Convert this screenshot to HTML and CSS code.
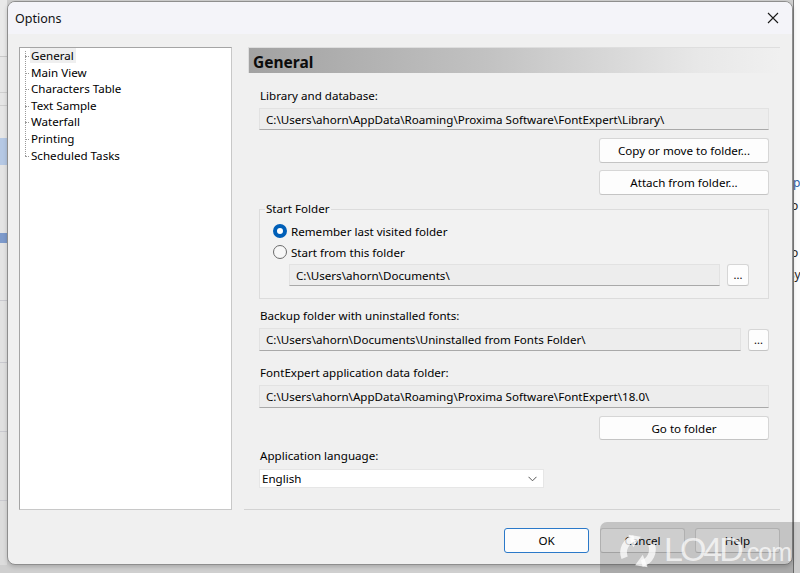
FILE: index.html
```html
<!DOCTYPE html>
<html>
<head>
<meta charset="utf-8">
<link rel="stylesheet" href="styles.css">
<title>Options</title>
</head>
<body>
<div class="desk-left"></div>
<div class="center-col">
  <div class="dialog">
    <div class="titlebar">
      <span class="title">Options</span>
      <svg class="close" width="12" height="12" viewBox="0 0 12 12"><path d="M1 1 L11 11 M11 1 L1 11" stroke="#1a1a1a" stroke-width="1.1" fill="none"/></svg>
    </div>
    <div class="body">
      <div class="tree">
        <ul class="tree-list">
          <li><span class="sel">General</span></li>
          <li>Main View</li>
          <li>Characters Table</li>
          <li>Text Sample</li>
          <li>Waterfall</li>
          <li>Printing</li>
          <li>Scheduled Tasks</li>
        </ul>
      </div>
      <div class="panel">
        <div class="panel-head">General</div>
        <div class="panel-body">
          <div class="label l1">Library and database:</div>
          <div class="field tb1">C:\Users\ahorn\AppData\Roaming\Proxima Software\FontExpert\Library\</div>
          <div class="btn-right b1"><button class="btn wide">Copy or move to folder...</button></div>
          <div class="btn-right b2"><button class="btn wide">Attach from folder...</button></div>
          <fieldset class="group">
            <legend>Start Folder</legend>
            <div class="radio r1"><span class="dot on"></span>Remember last visited folder</div>
            <div class="radio r2"><span class="dot"></span>Start from this folder</div>
            <div class="path-row">
              <div class="field grow">C:\Users\ahorn\Documents\</div>
              <button class="btn dots">...</button>
            </div>
          </fieldset>
          <div class="label l2">Backup folder with uninstalled fonts:</div>
          <div class="row2">
            <div class="field grow">C:\Users\ahorn\Documents\Uninstalled from Fonts Folder\</div>
            <button class="btn dots d2">...</button>
          </div>
          <div class="label l3">FontExpert application data folder:</div>
          <div class="field tb3">C:\Users\ahorn\AppData\Roaming\Proxima Software\FontExpert\18.0\</div>
          <div class="btn-right b3"><button class="btn wide tall">Go to folder</button></div>
          <div class="label l4">Application language:</div>
          <div class="select">
            <span>English</span>
            <svg width="9" height="6" viewBox="0 0 9 6"><path d="M0.5 0.8 L4.5 4.8 L8.5 0.8" stroke="#555" stroke-width="1" fill="none"/></svg>
          </div>
        </div>
      </div>
    </div>
    <div class="footer">
      <button class="btn fbtn ok">OK</button>
      <button class="btn fbtn">Cancel</button>
      <button class="btn fbtn">Help</button>
    </div>
  </div>
  <div class="watermark">
    <svg class="wm-logo" width="46" height="44" viewBox="0 0 48 46">
      <path d="M10 30 A15 15 0 0 1 20 10" stroke="rgba(255,255,255,0.75)" stroke-width="7" fill="none"/>
      <path d="M14 6 L27 8 L19 19 Z" fill="rgba(255,255,255,0.75)"/>
      <path d="M38 16 A15 15 0 0 1 28 36" stroke="rgba(255,255,255,0.75)" stroke-width="7" fill="none"/>
      <path d="M34 40 L21 38 L29 27 Z" fill="rgba(255,255,255,0.75)"/>
    </svg>
    <span class="wm-text">LO4D<small>.com</small></span>
  </div>
</div>
<div class="desk-right">
  <span class="frag f1">rp</span>
  <span class="frag f2">lo</span>
  <span class="frag f3">lo</span>
  <span class="frag f4">Sy</span>
</div>
</body>
</html>
```
FILE: styles.css
```css
* { box-sizing: border-box; }
html, body { margin: 0; padding: 0; }
body {
  width: 800px;
  height: 573px;
  overflow: hidden;
  display: flex;
  font-family: "Noto Sans", "Open Sans", sans-serif;
  font-size: 11.6px;
  color: #000;
  background: #cfcfcf;
}
.desk-left {
  width: 7px;
  flex: none;
  background: linear-gradient(to bottom,
    #e9e9e9 0, #e9e9e9 56px, #c9c9c9 56px, #c9c9c9 57px,
    #e6e6e6 57px, #e6e6e6 92px, #cfcfcf 92px, #cfcfcf 93px,
    #e6e6e6 93px, #e6e6e6 105px, #cfcfcf 105px, #cfcfcf 106px,
    #e6e6e6 106px, #e6e6e6 138px, #b5c8e4 138px, #b5c8e4 165px,
    #e4e4e4 165px, #e4e4e4 233px, #7d9acb 233px, #7d9acb 243px,
    #e4e4e4 243px, #e4e4e4 300px, #c9c9cf 300px, #c9c9cf 301px,
    #e2e2e2 301px, #e2e2e2 362px, #c9c9cf 362px, #c9c9cf 363px,
    #e0e0e0 363px, #e0e0e0 431px, #c9c9cf 431px, #c9c9cf 432px,
    #dedede 432px, #dedede 500px, #c9c9cf 500px, #c9c9cf 501px,
    #dcdcdc 501px, #dcdcdc 565px, #cfcfcf 565px);
}
.desk-right {
  width: 7px;
  flex: none;
  background: #fbfbfb;
  border-left: 1px solid #7c7c7c;
  display: flex;
  flex-direction: column;
  overflow: hidden;
  font-size: 12px;
  color: #222;
}
.frag { display: block; margin-left: -6px; line-height: 16px; white-space: nowrap; }
.f1 { margin-top: 175px; color: #2b5ea8; }
.f2 { margin-top: 7px; }
.f3 { margin-top: 31px; }
.f4 { margin-top: 6px; }
.center-col {
  width: 786px;
  flex: none;
  position: relative;
  padding-top: 1px;
}
.dialog {
  width: 786px;
  height: 564px;
  border: 1px solid #8e8e8e;
  border-radius: 8px;
  background: #f0f0f0;
  overflow: hidden;
  box-shadow: 0 2px 4px rgba(0,0,0,0.18);
}
.titlebar {
  height: 32px;
  background: #f4f4f9;
  display: flex;
  align-items: center;
  justify-content: space-between;
  padding: 0 13px 0 7px;
}
.title { font-size: 12.5px; color: #111; }
.close { display: block; }
.body {
  display: flex;
  padding: 13px 12px 0 11px;
  gap: 12px;
  height: 476px;
}
.tree {
  width: 213px;
  height: 463px;
  flex: none;
  background: #fff;
  border: 1px solid #a5a5a5;
  border-right-color: #c8c8c8;
  border-bottom-color: #c8c8c8;
}
.tree-list {
  list-style: none;
  margin: 0;
  padding: 0 0 0 11px;
  position: relative;
}
.tree-list::before {
  content: "";
  position: absolute;
  left: 5px;
  top: 3px;
  height: 105px;
  border-left: 1px dotted #9a9a9a;
}
.tree-list li {
  position: relative;
  height: 16.6px;
  line-height: 16.6px;
  white-space: nowrap;
}
.tree-list li::before {
  content: "";
  position: absolute;
  left: -6px;
  top: 8px;
  width: 4px;
  border-top: 1px dotted #9a9a9a;
}
.sel { background: #efefef; padding: 0 2px 0 1px; margin-left: -1px; }
.panel {
  width: 536px;
  flex: none;
  height: 463px;
  border-bottom: 1px solid #d3d3d3;
}
.panel-head {
  margin-left: 4px;
  height: 26px;
  background: linear-gradient(to right, #a2a2a2 0%, #c2c2c2 45%, #e8e8e8 85%, #f0f0f0 100%);
  border-top: 1px solid #dedede;
  border-left: 1px solid #dedede;
  font-weight: bold;
  font-size: 15.5px;
  line-height: 28px;
  padding-left: 4px;
  color: #0c0c0c;
}
.panel-body {
  padding: 0 11px 0 15px;
  display: flex;
  flex-direction: column;
}
.label { height: 16px; line-height: 16px; white-space: nowrap; padding-left: 1px; }
.l1 { margin-top: 15px; }
.l2 { margin-top: 9px; }
.l3 { margin-top: 14px; }
.l4 { margin-top: 8px; }
.field {
  height: 23px;
  line-height: 21px;
  padding-left: 6px;
  background: #ededed;
  border: 1px solid #e2e2e2;
  border-bottom-color: #a9a9a9;
  white-space: nowrap;
  overflow: hidden;
}
.tb1 { margin-top: 4px; height: 22px; }
.tb3 { margin-top: 4px; }
.btn {
  font: inherit;
  color: #000;
  background: #fdfdfd;
  border: 1px solid #d6d6d6;
  border-bottom-color: #c4c4c4;
  border-radius: 3px;
  padding: 0;
}
.btn-right { display: flex; justify-content: flex-end; }
.wide { width: 170px; height: 25px; }
.tall { height: 24px; }
.b1 { margin-top: 8px; }
.b2 { margin-top: 7px; }
.b3 { margin-top: 8px; }
.group {
  margin: 6px 0 0 0;
  padding: 0 19px 12px 13px;
  border: 1px solid #dcdcdc;
  background: #f2f2f2;
  min-width: 0;
}
.group legend {
  padding: 0 1px;
  margin-left: -8px;
  line-height: 16px;
  white-space: nowrap;
}
.radio {
  display: flex;
  align-items: center;
  height: 18px;
  white-space: nowrap;
}
.r1 { margin-top: 5px; }
.r2 { margin-top: 3px; }
.dot {
  width: 14px;
  height: 14px;
  border-radius: 50%;
  border: 1px solid #6b6b6b;
  background: #f7f7f7;
  margin-right: 4px;
  flex: none;
}
.dot.on {
  border: 4px solid #005fb8;
  background: #fff;
}
.path-row {
  display: flex;
  gap: 7px;
  margin-top: 3px;
  padding-left: 16px;
}
.path-row .field { height: 22px; }
.grow { flex: 1; }
.dots {
  width: 22px;
  height: 22px;
  flex: none;
  line-height: 14px;
  font-size: 11px;
}
.row2 {
  display: flex;
  gap: 7px;
  margin-top: 4px;
  align-items: flex-start;
}
.d2 { width: 21px; margin-top: 1px; }
.select {
  margin-top: 5px;
  width: 285px;
  height: 19px;
  background: #fff;
  border: 1px solid #e6e6e6;
  display: flex;
  align-items: center;
  justify-content: space-between;
  padding: 0 6px 0 2px;
}
.footer {
  display: flex;
  justify-content: flex-end;
  padding: 18px 12px 0 0;
  gap: 10px;
}
.fbtn { width: 85px; height: 25px; }
.ok { border: 1px solid #2b79c9; margin-right: 1px; }
.watermark {
  position: absolute;
  left: 593px;
  top: 522px;
  width: 210px;
  height: 55px;
  background: rgba(40,40,40,0.22);
  border-top-left-radius: 7px;
  display: flex;
  align-items: center;
  padding-left: 15px;
  gap: 3px;
}
.wm-logo { display: block; margin-top: 2px; }
.wm-text {
  font-family: "Liberation Sans", sans-serif;
  font-size: 34px;
  line-height: 40px;
  color: rgba(255,255,255,0.7);
  letter-spacing: -3px;
  margin-top: 2px;
  white-space: nowrap;
}
.wm-text small { font-size: 25px; letter-spacing: -1px; }
```
